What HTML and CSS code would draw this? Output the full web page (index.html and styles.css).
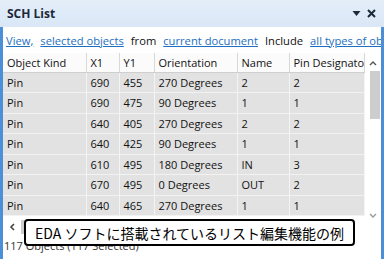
FILE: index.html
```html
<!DOCTYPE html>
<html lang="ja">
<head>
    <meta charset="UTF-8">
    <title>SCH List</title>
    <link rel="stylesheet" href="styles.css">
</head>
<body>

    <div class="panel">
        <div class="titlebar">
            <span class="title">SCH List</span>
            <span class="title-icons">
                <svg width="9" height="7" viewBox="0 0 9 7"><path d="M0.5 1h8L4.5 6z" fill="#1b2a3a"/></svg>
                <svg width="9" height="9" viewBox="0 0 9 9"><path d="M1 1l7 7M8 1l-7 7" stroke="#1b2a3a" stroke-width="2"/></svg>
            </span>
        </div>

        <div class="content">
            <!-- filter line -->
            <div class="filter">
                <a href="#">View,</a>
                <a href="#">selected objects</a>
                <span>from</span>
                <a href="#">current document</a>
                <span>Include</span>
                <a href="#">all types of objects</a>
            </div>

            <div class="grid-wrap">
                <div class="grid-area">
                    <table class="list">
                        <colgroup>
                            <col style="width: 83px">
                            <col style="width: 33px">
                            <col style="width: 35px">
                            <col style="width: 83px">
                            <col style="width: 52px">
                            <col style="width: 75px">
                        </colgroup>
                        <thead>
                            <tr><th>Object Kind</th><th>X1</th><th>Y1</th><th>Orientation</th><th>Name</th><th>Pin Designator</th></tr>
                        </thead>
                        <tbody>
                            <tr><td>Pin</td><td>690</td><td>455</td><td>270 Degrees</td><td>2</td><td>2</td></tr>
                            <tr><td>Pin</td><td>690</td><td>475</td><td>90 Degrees</td><td>1</td><td>1</td></tr>
                            <tr><td>Pin</td><td>640</td><td>405</td><td>270 Degrees</td><td>2</td><td>2</td></tr>
                            <tr><td>Pin</td><td>640</td><td>425</td><td>90 Degrees</td><td>1</td><td>1</td></tr>
                            <tr><td>Pin</td><td>610</td><td>495</td><td>180 Degrees</td><td>IN</td><td>3</td></tr>
                            <tr><td>Pin</td><td>670</td><td>495</td><td>0 Degrees</td><td>OUT</td><td>2</td></tr>
                            <tr><td>Pin</td><td>640</td><td>465</td><td>270 Degrees</td><td>1</td><td>1</td></tr>
                        </tbody>
                    </table>
                    <div class="hscroll">
                        <svg width="7" height="8" viewBox="0 0 7 8"><path d="M5 1L2 4l3 3" fill="none" stroke="#444" stroke-width="1.6"/></svg>
                        <div class="hthumb"></div>
                    </div>
                </div>
                <div class="vscroll">
                    <svg width="8" height="6" viewBox="0 0 8 6"><path d="M1 5l3-3 3 3" fill="none" stroke="#555" stroke-width="1.4"/></svg>
                    <div class="vthumb"></div>
                    <svg class="down" width="8" height="6" viewBox="0 0 8 6"><path d="M1 1l3 3 3-3" fill="none" stroke="#999" stroke-width="1.4"/></svg>
                </div>
            </div>

            <div class="status">117 Objects (117 Selected)</div>
        </div>

        <!-- caption over the screenshot -->
        <div class="caption">EDA ソフトに搭載されているリスト編集機能の例</div>
    </div>

</body>
</html>
```

FILE: styles.css
```css
/* General reset */
* {
    margin: 0;
    padding: 0;
    box-sizing: border-box;
}

body {
    width: 384px;
    height: 259px;
    overflow: hidden;
    font-family: "Open Sans", "Noto Sans", Arial, sans-serif;
    font-size: 11px;
    color: #111;
}

.panel {
    position: relative;
    width: 384px;
    height: 259px;
    background-color: #4a8fd8; /* blue frame */
    display: flex;
    flex-direction: column;
}

/* Title bar */
.titlebar {
    height: 27px;
    background: linear-gradient(#e4eef9, #d9e7f6);
    display: flex;
    justify-content: space-between;
    align-items: center;
    padding: 0 8px 0 7px;
}

.title {
    font-weight: bold;
    font-size: 12px;
    color: #1b2a3a;
}

.title-icons {
    display: flex;
    align-items: center;
    gap: 6px;
}

/* Content area */
.content {
    flex: 1;
    margin: 0 3px 0 3px;
    background-color: #fff;
    display: flex;
    flex-direction: column;
}

.filter {
    height: 26px;
    display: flex;
    align-items: center;
    gap: 7px;
    padding-left: 3px;
    font-size: 11.2px;
    white-space: nowrap;
    overflow: hidden;
}

.filter a {
    color: #1e6fc1;
}

.grid-wrap {
    display: flex;
}

.grid-area {
    width: 361px;
}

.list {
    table-layout: fixed;
    border-collapse: collapse;
    width: 361px;
}

.list th,
.list td {
    text-align: left;
    font-weight: normal;
    padding: 0 4px;
    white-space: nowrap;
    overflow: hidden;
    border-right: 1px solid #d8d8d8;
}

.list th {
    height: 19px;
    background-color: #fbfbfb;
    border-bottom: 1px solid #cfcfcf;
}

.list td {
    height: 20.5px;
    background-color: #e2e2e2;
    border-bottom: 1px solid #f2f2f2;
    border-right-color: #f4f4f4;
}

.hscroll {
    height: 22px;
    display: flex;
    align-items: center;
    gap: 5px;
    padding-left: 6px;
}

.hthumb {
    width: 60px;
    height: 14px;
    background-color: #cdcdcd;
}

.vscroll {
    width: 17px;
    display: flex;
    flex-direction: column;
    align-items: center;
    padding-top: 7px;
}

.vthumb {
    width: 10px;
    height: 48px;
    margin: 5px 0 0 4px;
    background-color: #cdcdcd;
}

.vscroll .down {
    margin-top: 94px;
}

.status {
    padding-left: 1px;
    color: #333;
}

/* Caption overlay */
.caption {
    position: absolute;
    left: 24px;
    top: 219px;
    width: 331px;
    height: 27px;
    background-color: #fff;
    border: 2px solid #000;
    border-radius: 4px;
    display: flex;
    align-items: center;
    justify-content: center;
    font-family: "Noto Sans CJK JP", sans-serif;
    font-size: 14px;
    color: #000;
    white-space: nowrap;
}
```
